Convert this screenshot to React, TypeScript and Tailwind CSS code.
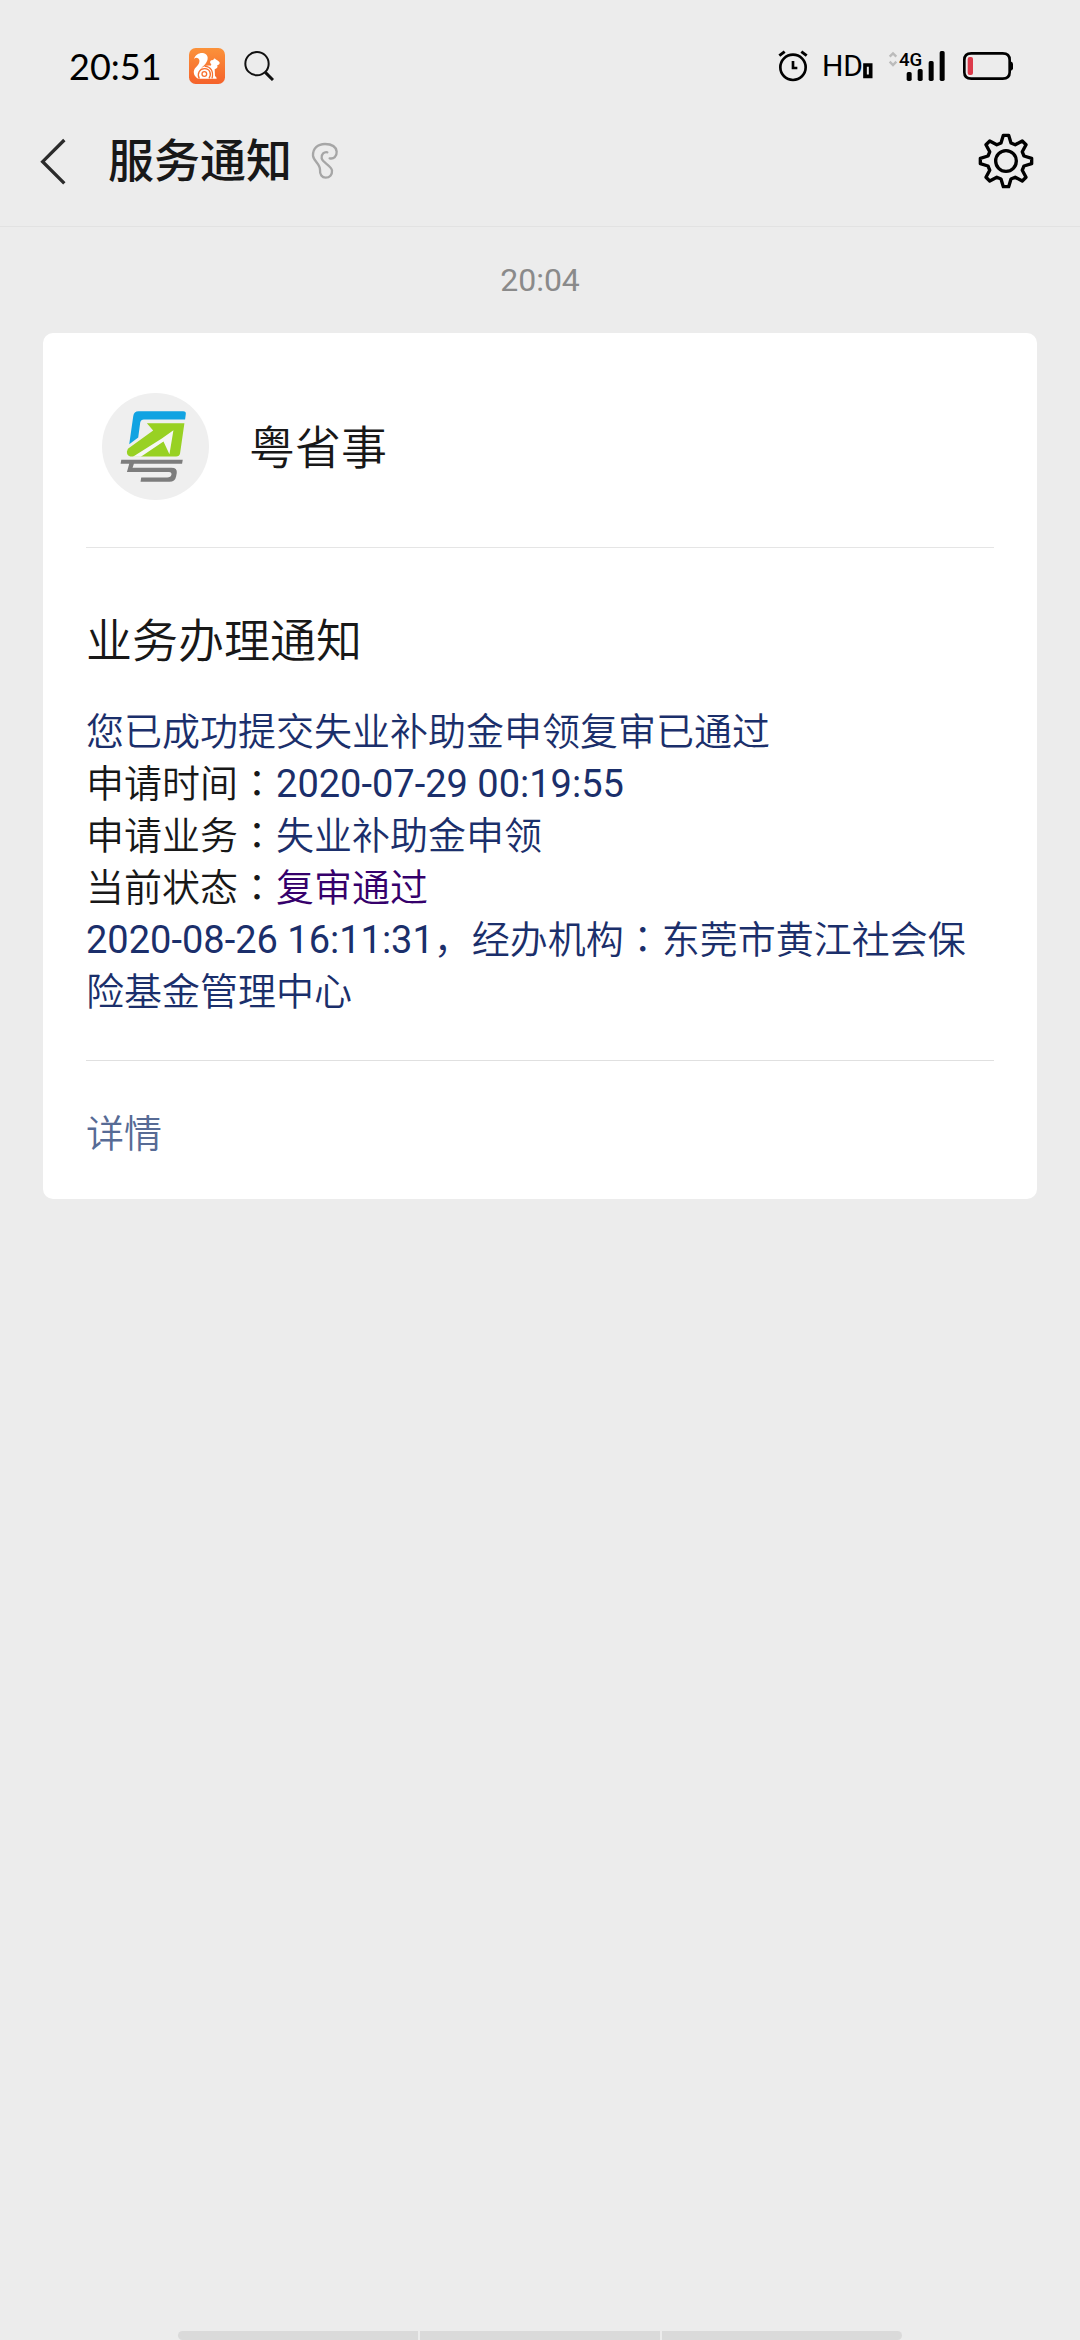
import type { ReactNode } from 'react';

const rows = [
  { label: '申请时间', value: '2020-07-29 00:19:55', color: 'text-[#1b2f6b] font-normal' },
  { label: '申请业务', value: '失业补助金申领', color: 'text-[#1b2f6b]' },
  { label: '当前状态', value: '复审通过', color: 'text-[#35006b]' },
];

// eight teeth, each one a tip and two base corners turned round the hub
const gearPoints = Array.from({ length: 8 }, (_, i) => {
  const a = (i * Math.PI) / 4;
  return [[-15, -54], [-8, -77], [8, -77], [15, -54]]
    .map(([x, y]) => `${x * Math.cos(a) - y * Math.sin(a)},${x * Math.sin(a) + y * Math.cos(a)}`)
    .join(' ');
}).join(' ');

function Colon() {
  return <span className="font-['Roboto','Noto_Sans_CJK_TC',sans-serif]" lang="zh-TW">：</span>;
}

function BrowserIcon() {
  return (
    <svg viewBox="0 0 108 108" className="w-9 h-9">
      <defs>
        <linearGradient id="uc" x1="0" y1="0" x2="0" y2="1">
          <stop offset="0" stopColor="#fb923a" />
          <stop offset="1" stopColor="#f5622b" />
        </linearGradient>
      </defs>
      <rect width="108" height="108" rx="20" fill="url(#uc)" />
      <path fill="#fff" d="M15 33C20 19 33 13 45 16C59 20 59 36 49 48C44 54 36 58 34 66C38 56 51 51 65 53L67 49C62 45 62 40 67 37L73 36C74 32 77 30 80 34C82 37 87 37 91 42C94 47 89 51 84 52C88 58 83 62 77 64L78 84C80 86 83 88 83 92H28C16 86 11 73 17 62C24 54 33 47 31 36C28 29 20 27 15 33Z" />
      <g fill="none" stroke="#f7702f">
        <path strokeWidth="4" d="M31 92C23 77 32 62 47 62C62 62 69 78 60 91" />
        <path strokeWidth="4" d="M47 55C64 54 75 70 69 91" />
        <circle cx="46" cy="78" r="7" strokeWidth="4" />
      </g>
    </svg>
  );
}

function StatusBar() {
  return (
    <div className="flex items-center h-[132px] pl-[69px] pr-[66px] text-black">
      <span className="font-['Lato',sans-serif] text-[36px] leading-none w-[120px]">20:51</span>
      <BrowserIcon />
      <svg viewBox="0 0 90 90" className="w-[30px] h-[30px] ml-[19px]" fill="none" stroke="#111">
        <circle cx="39" cy="38" r="35" strokeWidth="6" />
        <path d="M64 64L87 87" strokeWidth="9" />
      </svg>
      <div className="ml-auto flex items-center">
        <svg viewBox="48 62 90 96" className="w-[30px] h-8" fill="none" stroke="#000">
          <circle cx="93" cy="114" r="38" strokeWidth="8" />
          <path d="M52 79L68 67M118 67L134 79" strokeWidth="9" />
          <path d="M93 95V116H106" strokeWidth="8" />
        </svg>
        <div className="flex items-center ml-[14px]">
          <span className="text-[30px] leading-8 font-['Roboto',sans-serif]">HD</span>
          <svg viewBox="300 60 36 96" className="w-3 h-8">
            <path d="M306 105H323V139H306Z" fill="none" stroke="#000" strokeWidth="11" />
          </svg>
        </div>
        <svg viewBox="376 60 174 96" className="w-[58px] h-8 ml-[13px] overflow-visible">
          <path d="M381 80L391 70L401 80M381 95L391 105L401 95" fill="none" stroke="#bbb" strokeWidth="7" />
          <text x="409" y="107" fontSize="56" fontWeight="500" className="font-['Roboto',sans-serif]">4G</text>
          <rect x="432" y="126" width="15" height="27" rx="5" />
          <rect x="465" y="117" width="15" height="36" rx="5" />
          <rect x="498" y="93" width="15" height="60" rx="5" />
          <rect x="531" y="63" width="15" height="90" rx="5" />
        </svg>
        <svg viewBox="600 60 156 96" className="w-[52px] h-8 ml-4">
          <path d="M628 70H722Q743 70 743 90V127Q743 146 722 146H628Q607 146 607 127V90Q607 70 628 70Z" fill="none" stroke="#000" strokeWidth="8" />
          <path d="M745 94Q753 96 753 102V115Q753 121 745 123Z" />
          <rect x="617" y="81" width="16" height="54" rx="6" fill="#dc3b4b" />
        </svg>
      </div>
    </div>
  );
}

function Header() {
  return (
    <header className="flex items-center h-[95px] pb-9 pl-10 pr-[46px] border-b border-[#e2e2e2]">
      <button aria-label="返回" className="w-7 h-12">
        <svg viewBox="58 80 84 144" className="w-7 h-12" fill="none" stroke="#2b2b2b" strokeWidth="10">
          <path d="M131 89L66 154L131 219" />
        </svg>
      </button>
      <h1 className="ml-10 text-[46px] leading-[58px] font-medium text-[#181818]">服务通知</h1>
      <svg viewBox="870 92 90 120" className="w-[30px] h-10 ml-[18px]" fill="none" stroke="#a6a6a6" strokeWidth="7" strokeLinecap="round">
        <path d="M929 144C941 147 951 138 950 124C948 108 934 101 915 101C893 101 878 115 879 136C880 151 900 161 900 178C899 193 906 202 917 202C929 202 937 194 936 181C935 166 908 158 905 144C903 131 913 124 922 126" />
      </svg>
      <button aria-label="设置" className="ml-auto w-14 h-14">
        <svg viewBox="-84 -84 168 168" className="w-14 h-14" fill="none" stroke="#000" strokeWidth="10" strokeLinejoin="round">
          <polygon points={gearPoints} />
          <circle r="31" />
        </svg>
      </button>
    </header>
  );
}

function Logo() {
  return (
    <svg viewBox="36 37 322 322" className="w-[107px] h-[107px]">
      <circle cx="197" cy="198" r="161" fill="#efefef" />
      <path fill="#11a3e2" d="M146 92H280Q290 92 288 102L286 117H162Q153 117 151 126L145 171L118 191L130 107Q132 92 146 92Z" />
      <path fill="#98d123" d="M171 128H284L271 218Q269 228 259 228H121Q110 225 111 213L114 205L190 150Z" />
      <path fill="#f6f6f6" d="M251 149L239 221L221 183L153 229H129L216 174Z" />
      <path fill="#7d7d7d" d="M94 238H279L277 250H132L128 262H245Q263 262 261 278L259 288Q256 304 239 304H152L154 291H232Q243 291 245 283Q246 275 238 275H111L118 250H92Z" />
    </svg>
  );
}

function Line({ color = '', children }: { color?: string; children: ReactNode }) {
  return <p className={`text-[38px] leading-[52px] ${color}`}>{children}</p>;
}

export default function App() {
  return (
    <div className="min-h-screen flex flex-col bg-[#ececec] font-['Roboto','Noto_Sans_CJK_SC',sans-serif] text-[#181818]" lang="zh-CN">
      <StatusBar />
      <Header />

      <main className="flex-1 px-[43px]">
        <p className="py-8 text-center text-[32px] leading-[42px] text-[#8a8a8a]">20:04</p>

        <article className="bg-white rounded-[10px] px-[43px] font-[350]">
          <div className="flex items-center h-[215px] pt-3 pl-4 gap-10 border-b border-[#e5e5e5]">
            <Logo />
            <span className="pt-1 text-[46px] leading-[58px]">粤省事</span>
          </div>

          <div className="pt-16 pb-[42px] border-b border-[#e0e0e0]">
            <h2 className="text-[46px] leading-[58px] mb-9 font-[350]">业务办理通知</h2>
            <Line color="text-[#1b2f6b]">您已成功提交失业补助金申领复审已通过</Line>
            {rows.map((row) => (
              <Line key={row.label}>
                {row.label}
                <Colon />
                <span className={row.color}>{row.value}</span>
              </Line>
            ))}
            <Line color="text-[#1b2f6b]">
              <time className="font-normal">2020-08-26 16:11:31</time>，经办机构
              <Colon />
              东莞市黄江社会保险基金管理中心
            </Line>
          </div>

          <a href="#detail" className="block pt-12 pb-10 text-[38px] leading-[50px] text-[#576b95]">详情</a>
        </article>
      </main>

      <nav className="grid grid-cols-3 gap-0.5 px-[178px]">
        <div className="h-[9px] bg-[#dadada] rounded-l-full"></div>
        <div className="h-[9px] bg-[#dadada]"></div>
        <div className="h-[9px] bg-[#dadada] rounded-r-full"></div>
      </nav>
    </div>
  );
}
